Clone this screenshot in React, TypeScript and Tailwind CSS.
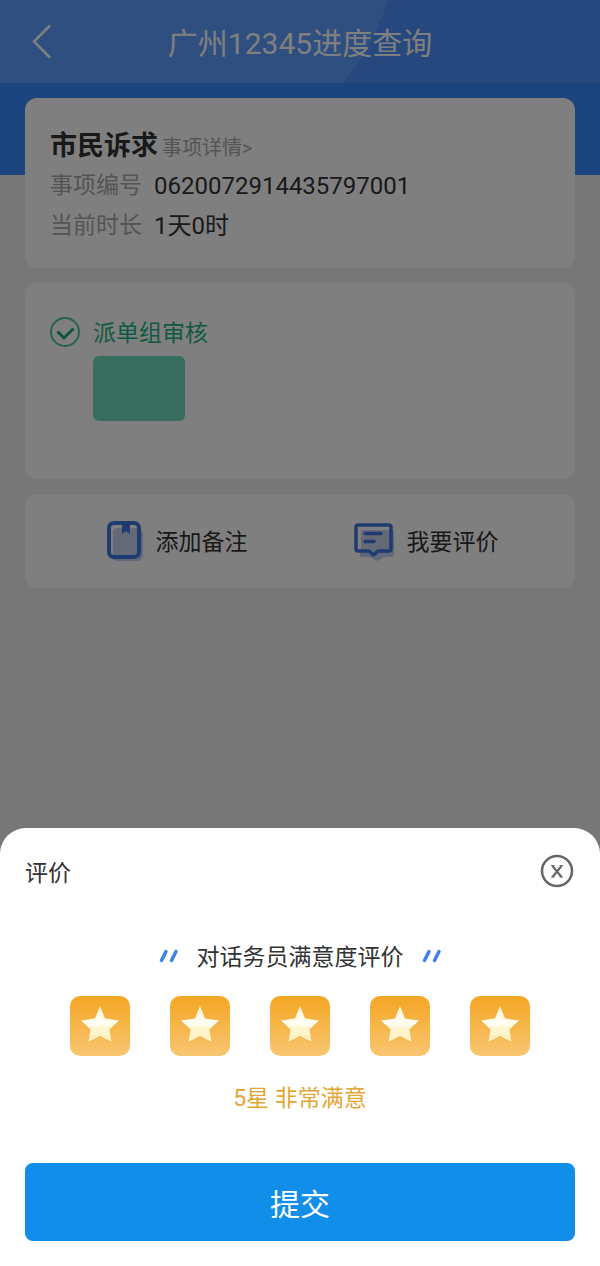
import React, { useState } from 'react';

interface DetailRow {
  label: string;
  value: string;
}

const details: DetailRow[] = [
  { label: '事项编号', value: '0620072914435797001' },
  { label: '当前时长', value: '1天0时' }
];

const ratingLabels = ['非常不满意', '不满意', '一般', '满意', '非常满意'];

function NoteIcon() {
  return (
    <svg viewBox="0 0 38 42" className="h-[42px] w-[38px]" fill="none" aria-hidden="true">
      <rect x="5" y="8" width="32" height="33" rx="6" fill="#c3d0f4" />
      <rect x="2" y="3" width="30" height="34" rx="5" fill="#ffffff" />
      <path d="M7 12a4 4 0 0 1 4-4h21v29H7z" fill="#c9d3ee" />
      <rect x="3" y="3" width="30" height="34" rx="5" stroke="#3f76e0" strokeWidth="4" />
      <path d="M16 3h8v11l-4-3-4 3z" fill="#3f76e0" />
    </svg>
  );
}

function CommentIcon() {
  return (
    <svg viewBox="0 0 41 42" className="h-[42px] w-[41px]" fill="none" aria-hidden="true">
      <path d="M6 10h32a2 2 0 0 1 2 2v23a2 2 0 0 1-2 2h-8l-7 4-7-4H6z" fill="#c3d0f4" />
      <path d="M4 5h31a2 2 0 0 1 2 2v22a2 2 0 0 1-2 2H24l-4.500 4-4.500-4H4a2 2 0 0 1-2-2V7a2 2 0 0 1 2-2z" fill="#ffffff" />
      <path d="M7 10h30v21H24l-4.500 4-4.500-4H7z" fill="#c9d3ee" />
      <path
        d="M4 5h31a2 2 0 0 1 2 2v22a2 2 0 0 1-2 2H24l-4.500 4-4.500-4H4a2 2 0 0 1-2-2V7a2 2 0 0 1 2-2z"
        stroke="#3f76e0"
        strokeWidth="3.500"
        strokeLinejoin="round"
      />
      <path d="M11 13.500h16M11 21.500h9" stroke="#3f76e0" strokeWidth="3.500" strokeLinecap="round" />
    </svg>
  );
}

function Slashes() {
  return (
    <svg viewBox="0 0 20 14" className="mb-1 h-[14px] w-5" fill="none" aria-hidden="true">
      <path d="M2.500 11.500L7 2.500M12.500 11.500l4.500-9" stroke="#3f82e8" strokeWidth="3.500" strokeLinecap="round" />
    </svg>
  );
}

function Star({ filled }: { filled: boolean }) {
  return (
    <svg viewBox="0 0 60 60" className={filled ? 'h-[60px] w-[60px]' : 'h-[60px] w-[60px] grayscale'} aria-hidden="true">
      <defs>
        <linearGradient id="tile" x1="0" y1="0" x2="0" y2="1">
          <stop offset="0" stopColor="#f4a623" />
          <stop offset="1" stopColor="#f9c672" />
        </linearGradient>
        <linearGradient id="star" x1="0" y1="0" x2="0" y2="1">
          <stop offset="0" stopColor="#fff6d8" />
          <stop offset="0.500" stopColor="#fffdf4" />
          <stop offset="0.600" stopColor="#fff6d2" />
          <stop offset="1" stopColor="#fff0bc" />
        </linearGradient>
      </defs>
      <rect width="60" height="60" rx="10" fill="url(#tile)" />
      <path d="M30 11l5 12.500 14 2-9.500 9.500L41.500 47 30 41l-11.500 6 2-12L11 25.500l14-2z" fill="#e29a2a" opacity="0.300" />
      <path d="M30 10l5 12.500 14 2-9.500 9L41.500 46 30 40l-11.500 6 2-12.500-9.500-9 14-2z" fill="url(#star)" />
    </svg>
  );
}

export default function App() {
  const [open, setOpen] = useState(true);
  const [rating, setRating] = useState(5);

  return (
    <div className="min-h-screen bg-[#eeeeee] text-[#333333] font-[Roboto,'Noto_Sans_CJK_SC',sans-serif]">
      <header className="relative flex h-[83px] items-center bg-[#4e8eff] px-[30px] text-white">
        <svg viewBox="0 0 600 83" preserveAspectRatio="none" className="absolute inset-0 h-full w-full" aria-hidden="true">
          <path d="M0 0h388Q372 50 343 83H0z" fill="#5c9eff" />
        </svg>
        <button aria-label="返回" className="relative w-6">
          <svg viewBox="0 0 24 36" className="h-9 w-6" fill="none">
            <path d="M20 1.500L4 17.500l16 16" stroke="#ffffff" strokeWidth="2.500" />
          </svg>
        </button>
        <h1 className="relative mt-1 flex-1 pr-6 text-center text-[30px] leading-10">广州12345进度查询</h1>
      </header>

      <div className="h-[92px] bg-[#3888fe]" />

      <main className="-mt-[77px] flex flex-col gap-[15px] px-[25px]">
        <section className="rounded-xl bg-white px-[25px] pt-7 pb-[22px]">
          <div className="flex h-10 items-baseline gap-1">
            <h2 className="text-[27px] font-bold leading-10">市民诉求</h2>
            <a href="#" className="text-xl leading-10 text-[#aaaaaa]">事项详情&gt;</a>
          </div>
          <dl>
            {details.map((row) => (
              <div key={row.label} className="flex h-10 gap-3">
                <dt className="text-[23px] leading-10 text-[#aaaaaa]">{row.label}</dt>
                <dd className="text-2xl leading-10">{row.value}</dd>
              </div>
            ))}
          </dl>
        </section>

        <section className="rounded-xl bg-white px-[25px] pt-[29px] pb-[58px]">
          <div className="flex h-10 items-center gap-[13px]">
            <svg viewBox="0 0 30 30" className="h-[30px] w-[30px]" fill="none" aria-hidden="true">
              <circle cx="15" cy="15" r="14" stroke="#4cc4a0" strokeWidth="2" />
              <path d="M7.500 14.500l6.500 6.500 9.500-9.500" stroke="#1fa67e" strokeWidth="3" />
            </svg>
            <h3 className="pt-1 text-[23px] leading-8 text-[#20b488]">派单组审核</h3>
          </div>
          <div className="mt-1 ml-[43px] h-[65px] w-[92px] rounded-md bg-[#70dcc0]" />
        </section>

        <section className="flex justify-center gap-[106px] rounded-xl bg-white py-[26px] pl-1">
          <button className="flex items-center gap-3 text-[23px]">
            <NoteIcon />
            <span className="pt-1 leading-8">添加备注</span>
          </button>
          <button onClick={() => setOpen(true)} className="flex items-center gap-3 text-[23px]">
            <CommentIcon />
            <span className="pt-1 leading-8">我要评价</span>
          </button>
        </section>
      </main>

      {open && (
        <div className="fixed inset-0 flex flex-col justify-end bg-black/50">
          <div role="dialog" aria-labelledby="dialog-title" className="rounded-t-[26px] bg-white px-[25px] pt-[26px] pb-[25px]">
            <div className="flex h-9 items-center justify-between">
              <h2 id="dialog-title" className="pt-1 text-[23px] leading-8">评价</h2>
              <button aria-label="关闭" onClick={() => setOpen(false)}>
                <svg viewBox="0 0 36 36" className="h-9 w-9" fill="none">
                  <circle cx="18" cy="17" r="15" stroke="#666666" strokeWidth="2.500" />
                  <path d="M13.500 12l9 11M22.500 12l-9 11" stroke="#666666" strokeWidth="2.200" />
                  <path d="M12 11.500h3.500M20.500 11.500H24M12 23h3.500M20.500 23H24" stroke="#666666" strokeWidth="1.200" />
                </svg>
              </button>
            </div>

            <div className="mt-[52px] flex items-center justify-center gap-[18px]">
              <Slashes />
              <h3 id="rating-title" className="text-[23px] leading-8">对话务员满意度评价</h3>
              <Slashes />
            </div>

            <div role="radiogroup" aria-labelledby="rating-title" className="mt-[22px] flex justify-center gap-10">
              {ratingLabels.map((label, i) => (
                <label key={label} className="relative cursor-pointer">
                  <input
                    type="radio"
                    name="rating"
                    aria-label={label}
                    checked={rating === i + 1}
                    onChange={() => setRating(i + 1)}
                    className="sr-only"
                  />
                  <Star filled={i < rating} />
                </label>
              ))}
            </div>

            <p className="mt-[27px] text-center text-[23px] leading-8 text-[#e2a637]">
              {rating}星 {ratingLabels[rating - 1]}
            </p>

            <button className="mt-12 h-[78px] w-full rounded-lg bg-[#118eea] pt-1 text-[30px] text-white">提交</button>
          </div>
        </div>
      )}
    </div>
  );
}
